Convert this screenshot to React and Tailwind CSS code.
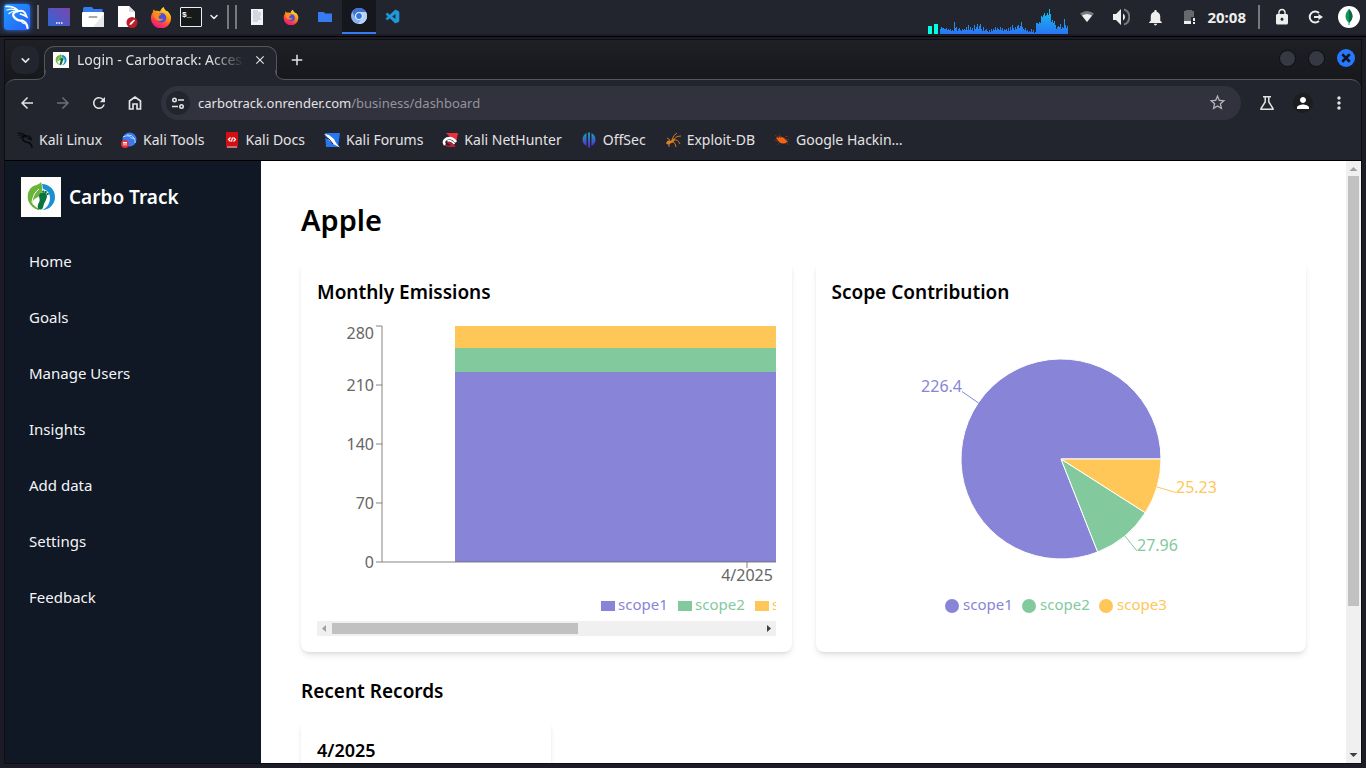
import { VscVscode } from "react-icons/vsc";
import {
  MdArrowBack,
  MdArrowForward,
  MdRefresh,
  MdStarBorder,
  MdPerson,
  MdMoreVert,
  MdNotifications,
  MdLock,
  MdClose,
  MdAdd,
} from "react-icons/md";
import { ChevronDown } from "lucide-react";

const UI = "font-['Noto_Sans','Open_Sans',sans-serif]";

const cpuLoad = [
  5, 7, 6, 6, 5, 5, 6, 4, 5, 4, 5, 3, 4, 3, 12, 6, 7, 3, 5, 6, 4, 3, 5, 4, 5, 4, 7, 4, 9, 4, 7, 4,
  6, 3, 9, 5, 7, 10, 5, 8, 10, 5, 3, 7, 3, 4, 5, 3, 2, 4, 2, 5, 3, 5, 4, 7, 4, 6, 5, 4, 7, 4, 6, 3,
  5, 4, 5, 3, 6, 3, 7, 4, 9, 6, 4, 7, 5, 8, 9, 6, 8, 12, 7, 5, 4, 6, 3, 4, 2, 3, 2, 5, 2, 4, 1, 2,
  11, 11, 10, 12, 11, 18, 17, 19, 21, 18, 19, 21, 19, 25, 20, 12, 14, 11, 13, 9, 5, 7, 8, 7, 10, 5,
  7, 6, 15, 9, 6, 8,
];

function Dragon({ size, color }) {
  return (
    <svg width={size} height={size} viewBox="0 0 24 24" fill="none" stroke={color} strokeWidth="1.700" strokeLinecap="round" aria-hidden="true">
      <path d="M1 1.500Q9 1 13.500 6" />
      <path d="M2 5Q8 3 13 6M4 8.500Q8 5 13 6.500" strokeWidth="1.300" />
      <path d="M13 6Q6 8 9 12t8 3.500Q22 17 22.500 23" strokeWidth="2.200" />
      <path d="M12.500 6.500Q18 4.500 20 8l1.500 3.500-3-1.500-3-1" strokeWidth="1.800" />
      <path d="M16 16q2 3 5 3" strokeWidth="1.200" />
    </svg>
  );
}

function Firefox({ size }) {
  return (
    <svg width={size} height={size} viewBox="0 0 24 24" aria-hidden="true">
      <defs>
        <linearGradient id="fx" x1="0.8" y1="0" x2="0.3" y2="1">
          <stop offset="0" stopColor="#fff24a" />
          <stop offset="0.4" stopColor="#ff980e" />
          <stop offset="0.75" stopColor="#ff3750" />
          <stop offset="1" stopColor="#e31587" />
        </linearGradient>
      </defs>
      <path d="M15 1c.3 2 1.500 3 3 4.500.8-.2 1.500.2 2 1 2 2.200 3 4 3 7A11 11 0 0 1 1 13.500c0-3 .8-5 2-6.500 0-1.200.4-2.500 1.300-3.500.2 1 .7 1.600 1.200 2C8 5 9.500 5.500 11 6c.5-2 2-4 4-5z" fill="url(#fx)" />
      <circle cx="12.500" cy="13" r="5.300" fill="#4b4fdc" />
      <path d="M4 7c2-.6 3.500 0 4.500 1l4 .4c.2 1.200-1.800 1.600-2.500 2.200-.8 1-.7 2 0 3 1.400 1 3 .4 4.300.4-1 2.600-5.300 3.200-7.800.8C4.500 13 4 10 4 7z" fill="#ff8a1c" />
    </svg>
  );
}

function Leaf({ size }) {
  return (
    <svg width={size} height={size} viewBox="0 0 40 40" aria-hidden="true">
      <rect width="40" height="40" fill="#fffdfb" />
      <path d="M21 7a13 13 0 0 1 0 26c4-1 8-6 8-12 0-5-3-8-7-9z" fill="#1a90d0" />
      <path d="M8.500 14A13 13 0 0 0 18 32.500C10 28 8 23 9.500 18z" fill="#5fae35" stroke="#5fae35" />
      <path d="M20 5c1.500 5 2 10-1 13.500C15 22 13 21 11 26 7 20 6 14 11 10c3-2 7-2 9-5z" fill="#6cb33b" />
      <path d="M11 25c1-6 3-10 7-13" stroke="#fff" fill="none" />
      <path d="M20 16c3-2 6 0 6 3s-2 5-3 8-1 6-4 5.500-2.500-4-1.500-6 1.500-3 1-5-1-4 1.500-5.500z" fill="#08743f" />
      <path d="M22 14.500h.5M24.500 15h.5M26.500 17h.5" stroke="#08743f" strokeWidth="1.800" strokeLinecap="round" />
    </svg>
  );
}

function Divider() {
  return <span className="h-6 w-0.5 bg-[#77797e]" />;
}

function TaskIcon({ label, children, className = "w-[34px]" }) {
  return (
    <button aria-label={label} className={`flex h-[34px] items-center justify-center ${className}`}>
      {children}
    </button>
  );
}

function Taskbar() {
  return (
    <header className="flex h-[34px] shrink-0 items-center bg-[#23252e] text-[#eeeeec]">
      <button
        aria-label="Applications"
        className="ml-1 flex size-[26px] items-center justify-center rounded-[3px] bg-linear-to-br from-[#1a9bff] to-[#2b5cf5] shadow-[0_0_5px_#2472f5]"
      >
        <Dragon size={24} color="#fff" />
      </button>
      <span className="ml-[7px] flex"><Divider /></span>
      <div className="ml-[3px] flex items-center">
        <TaskIcon label="Show desktop">
          <svg width="22" height="18" viewBox="0 0 22 18">
            <defs><linearGradient id="desk" x1="0" y1="1" x2="1" y2="0"><stop offset="0" stopColor="#2f66d8" /><stop offset="1" stopColor="#7b46ab" /></linearGradient></defs>
            <rect width="22" height="18" rx="1" fill="url(#desk)" />
            <path d="M8 15h1.500M10.500 15H12M13 15h1.500" stroke="#fff" strokeWidth="1.500" />
          </svg>
        </TaskIcon>
        <TaskIcon label="File manager">
          <svg width="22" height="20" viewBox="0 0 22 20">
            <path d="M1 6V1.500Q1 0 2.500 0H10l1.500 2h9V6z" fill="#367bf0" />
            <rect y="5" width="22" height="15" rx="1" fill="#fff" />
            <path d="M22 7v12q0 1-1 1H11z" fill="#e8e8e8" />
            <path d="M7.500 10h7" stroke="#aaa" strokeWidth="2" strokeLinecap="round" />
          </svg>
        </TaskIcon>
        <TaskIcon label="Text editor">
          <svg width="22" height="22" viewBox="0 0 22 22">
            <path d="M2 0h11l6 6v15H2z" fill="#fff" /><path d="M13 0v6h6z" fill="#ddd" />
            <circle cx="16" cy="16.500" r="5.500" fill="#c01c28" />
            <path d="m13.500 19 .5-2 4-3.500 1 1-3.500 4z" fill="#fff" />
          </svg>
        </TaskIcon>
        <TaskIcon label="Web browser"><Firefox size={22} /></TaskIcon>
        <TaskIcon label="Terminal" className="w-[26px]">
          <svg width="22" height="20" viewBox="0 0 22 20">
            <rect x=".5" y=".5" width="21" height="19" rx=".5" fill="#171a1b" stroke="#eee" />
            <text x="2" y="10" fill="#fff" fontSize="8" fontWeight="700" fontFamily="Liberation Mono, monospace">$_</text>
          </svg>
        </TaskIcon>
        <TaskIcon label="More terminals" className="w-5"><ChevronDown size={12} strokeWidth={3} /></TaskIcon>
      </div>
      <span className="ml-[3px] flex gap-1.5"><Divider /><Divider /></span>
      <div className="ml-[3px] flex items-center">
        <TaskIcon label="Notes window">
          <svg width="14" height="18" viewBox="0 0 14 18">
            <path d="M1 1h12v16H1z" fill="#f3f3f5" />
            <path d="M3 3h5M3 5h8M3 7h8M3 9h7M3 11h8M3 13h5" stroke="#b4b8d0" />
          </svg>
        </TaskIcon>
        <TaskIcon label="Firefox window"><Firefox size={16} /></TaskIcon>
        <TaskIcon label="Folder window">
          <svg width="14" height="12" viewBox="0 0 14 12"><path d="M0 1h6l1 1.500h7V11H0z" fill="#367bf0" /></svg>
        </TaskIcon>
        <TaskIcon label="Chromium window" className="w-[34px] border-b-2 border-[#367bf0] bg-[#16171d]">
          <svg width="16" height="16" viewBox="0 0 16 16">
            <circle cx="8" cy="8" r="8" fill="#8ab4f0" />
            <path d="M8 4h7A8 8 0 0 0 1.200 3.700L4.500 10A4 4 0 0 1 8 4z" fill="#3f72cf" />
            <path d="M15 4a8 8 0 0 1-8 12l4.500-6A4 4 0 0 0 8 4z" fill="#b8d3fb" />
            <circle cx="8" cy="8" r="3.800" fill="#fff" /><circle cx="8" cy="8" r="2.900" fill="#3573dc" />
          </svg>
        </TaskIcon>
        <TaskIcon label="VS Code window"><VscVscode size={16} color="#1f98dc" stroke="#1f98dc" strokeWidth={0.6} /></TaskIcon>
      </div>

      <div className="ml-auto flex h-full items-center pr-1.5">
        <svg className="mr-[7px]" width="140" height="34" viewBox="0 0 140 34" role="img" aria-label="System load" shapeRendering="crispEdges">
          <defs>
            <linearGradient id="load" gradientUnits="userSpaceOnUse" x1="0" y1="10" x2="0" y2="34">
              <stop offset="0" stopColor="#12bfee" /><stop offset="1" stopColor="#2a74f5" />
            </linearGradient>
          </defs>
          <path d="M0 26h4v8H0zM6 24h4v10H6z" fill="#00ffdf" />
          {cpuLoad.map((h, i) => (
            <rect key={i} x={12 + i} y={34 - h} width="1" height={h} fill="url(#load)" />
          ))}
        </svg>
        <TaskIcon label="Network" className="w-6">
          <svg width="16" height="14" viewBox="0 0 16 14">
            <path d="M1 3.500Q8-1.500 15 3.500L8 12z" fill="#77797e" /><path d="M3 5.500Q8 2.500 13 5.500L8 12z" fill="#eee" />
          </svg>
        </TaskIcon>
        <TaskIcon label="Volume" className="ml-2.5 w-6">
          <svg width="18" height="18" viewBox="0 0 18 18" fill="none">
            <path d="M1 6h3l5-5v16l-5-5H1z" fill="#eee" />
            <path d="M11 5.500q2 1 2 3.500t-2 3.500z" fill="#eee" />
            <path d="M12 1.500c7 2 7 13 0 15" stroke="#77797e" strokeWidth="2" />
          </svg>
        </TaskIcon>
        <TaskIcon label="Notifications" className="ml-2.5 w-6"><MdNotifications size={19} /></TaskIcon>
        <TaskIcon label="Battery" className="ml-2.5 w-6">
          <svg width="14" height="16" viewBox="0 0 14 16">
            <path d="M2 2h2V1h6v1h2v6H9v4H2z" fill="#68696e" /><path d="M2 12h7v3H2z" fill="#eee" /><path d="M11 9h2v3h-2zM11 13h2v2h-2z" fill="#eee" />
          </svg>
        </TaskIcon>
        <time className="ml-1.5 text-[15px] font-bold">20:08</time>
        <span className="ml-3 flex"><Divider /></span>
        <TaskIcon label="Lock screen" className="ml-2.5 w-6"><MdLock size={18} /></TaskIcon>
        <TaskIcon label="Log out" className="ml-2.5 w-6">
          <svg width="16" height="16" viewBox="0 0 16 16" fill="none" stroke="#eee" strokeWidth="2">
            <path d="M11 4A5.500 5.500 0 1 0 11 12M6 8h5" /><path d="m10.500 5 4.500 3-4.500 3z" fill="#eee" stroke="none" />
          </svg>
        </TaskIcon>
        <button aria-label="MongoDB" className="ml-2.5 flex size-[22px] items-center justify-center rounded-full bg-white">
          <svg width="8" height="16" viewBox="0 0 8 16"><path d="M4 0c4 4 5 9 .5 13.500V16h-1v-2.500C-1 9 0 4 4 0z" fill="#10955a" /><path d="M4 0c4 4 5 9 .5 13.500H4z" fill="#096b45" /></svg>
        </button>
      </div>
    </header>
  );
}

function TabStrip() {
  return (
    <div className="flex h-[39px] items-end bg-linear-to-b from-[#1e2026] to-[#17181c] pl-1.5 text-[#e3e3e3]">
      <button aria-label="Search tabs" className="mb-[5px] flex size-7 items-center justify-center rounded-[10px] bg-[#23252e]">
        <ChevronDown size={13} strokeWidth={3} />
      </button>
      <div className="relative z-10 ml-[5px] -mb-px flex h-[34px] w-[233px] items-center rounded-t-[10px] border border-b-0 border-[#55575d] bg-[#23252e] px-2">
        <svg className="absolute bottom-0 -left-[9px]" width="10" height="10" viewBox="0 0 10 10"><path d="M10 0q0 9.500-10 9.500V10h10z" fill="#23252e" /><path d="M9.500 0q0 9.500-9.500 9.500" fill="none" stroke="#55575d" /></svg>
        <svg className="absolute bottom-0 -right-[9px]" width="10" height="10" viewBox="0 0 10 10"><path d="M0 0q0 9.500 10 9.500V10H0z" fill="#23252e" /><path d="M.5 0q0 9.500 9.500 9.500" fill="none" stroke="#55575d" /></svg>
        <span className="mb-2 flex w-full items-center">
          <Leaf size={16} />
          <span className="ml-2 flex-1 overflow-hidden whitespace-nowrap text-[14px] leading-5 [mask-image:linear-gradient(to_right,black_80%,transparent)]">
            Login - Carbotrack: Access
          </span>
          <button aria-label="Close tab" className="ml-2 flex size-4 items-center justify-center"><MdClose size={14} /></button>
        </span>
      </div>
      <button aria-label="New tab" className="mb-[9px] ml-2.5 flex size-5 items-center justify-center"><MdAdd size={18} /></button>
      <div className="mb-3 ml-auto mr-1.5 flex items-center gap-3">
        <button aria-label="Minimize" className="size-[17px] rounded-full border border-[#0d0e11] bg-[#363944]" />
        <button aria-label="Maximize" className="size-[17px] rounded-full border border-[#0d0e11] bg-[#363944]" />
        <button aria-label="Close window" className="flex size-[18px] items-center justify-center rounded-full bg-[#2777ff]">
          <svg width="10" height="10" viewBox="0 0 8 8"><path d="m1 1 6 6M7 1 1 7" stroke="#10131c" strokeWidth="2" /></svg>
        </button>
      </div>
    </div>
  );
}

function ToolButton({ label, children }) {
  return <button aria-label={label} className="flex size-9 items-center justify-center">{children}</button>;
}

function Toolbar() {
  return (
    <div className="flex h-[46px] items-center rounded-t-[10px] border-t border-[#55575d] bg-[#23252e] px-1 text-[#e3e3e3]">
      <ToolButton label="Back"><MdArrowBack size={18} /></ToolButton>
      <ToolButton label="Forward"><MdArrowForward size={18} color="#6d6f75" /></ToolButton>
      <ToolButton label="Reload"><MdRefresh size={18} /></ToolButton>
      <ToolButton label="Home page">
        <svg width="14" height="16" viewBox="0 0 14 16" fill="none" stroke="currentColor" strokeWidth="1.700"><path d="M1.500 14V6L7 2l5.500 4v8H9V9H5v5z" /></svg>
      </ToolButton>
      <form className="ml-2 mr-2 flex h-[34px] flex-1 items-center rounded-full bg-[#31323e] pl-[5px] pr-1.5" onSubmit={(e) => e.preventDefault()}>
        <button type="button" aria-label="Site information" className="flex size-6 items-center justify-center rounded-full bg-[#23252e]">
          <svg width="14" height="14" viewBox="0 0 14 14" fill="none" stroke="currentColor" strokeWidth="1.600">
            <circle cx="3.500" cy="4" r="1.700" /><path d="M7 4h6M1 10.500h6" /><circle cx="10.500" cy="10.500" r="1.700" />
          </svg>
        </button>
        <div className="relative ml-2 flex-1 text-[13px] leading-5">
          <input aria-label="Address" readOnly value="carbotrack.onrender.com/business/dashboard" className="w-full bg-transparent text-[#93959b] outline-none" />
          <span aria-hidden="true" className="pointer-events-none absolute left-0 top-0 bg-[#31323e]">carbotrack.onrender.com</span>
        </div>
        <button type="button" aria-label="Bookmark this page" className="flex size-9 items-center justify-center text-[#b5b6ba]"><MdStarBorder size={19} /></button>
      </form>
      <ToolButton label="Labs">
        <svg width="16" height="16" viewBox="0 0 16 16" fill="none" stroke="currentColor" strokeWidth="1.500"><path d="M4 1.800h8M6.200 2v5L2 13.500v.7h12v-.7L9.800 7V2" /></svg>
      </ToolButton>
      <ToolButton label="Profile"><span className="flex size-5 items-center justify-center rounded-full bg-[#1b1d1f] text-white"><MdPerson size={18} /></span></ToolButton>
      <ToolButton label="Menu"><MdMoreVert size={20} /></ToolButton>
    </div>
  );
}

const svg16 = { width: 16, height: 16, viewBox: "0 0 16 16", fill: "none", "aria-hidden": true };

const bookmarks = [
  ["Kali Linux", <Dragon size={16} color="#08090b" />],
  ["Kali Tools", <svg {...svg16}><circle cx="8.500" cy="7.500" r="7" fill="#367bf0" /><path d="M2 5q6-3 8 1 5 0 4 5M6 3q5-1 8 4" stroke="#bcd4ff" /><circle cx="4" cy="12" r="4" fill="#e5303c" /><path d="M2 10.500h4M3 10.500v3M5 10.500v3" stroke="#fff" /></svg>],
  ["Kali Docs", <svg {...svg16}><path d="M2 0h12v16H2z" fill="#d40f14" /><path d="M2 14h12v2H2z" fill="#8d1014" /><path d="M3 15h10" stroke="#ddd" /><path d="M6.500 5.500 4.500 7.500l2 2M9.500 5.500l2 2-2 2M7.500 9.500l1-4" stroke="#fff" strokeWidth="1.200" /></svg>],
  ["Kali Forums", <svg {...svg16}><path d="M1 1h15l-2 14H2z" fill="#2777f0" /><path d="m0 2 5 1 5 4 2 4 4 4.500-6-3-5-4-2-4z" fill="#fff" /><path d="M1 5l4 2 4 5" stroke="#10131c" /></svg>],
  ["Kali NetHunter", <svg {...svg16}><path d="M4 1h12l-2 10z" fill="#ee303c" /><path d="M3 13Q0 9 5 6.500q5-2 9 3.500" stroke="#fff" strokeWidth="2.600" /><path d="M3 13q3 2 8 1M5 9.500l8 5" stroke="#d01f38" strokeWidth="1.500" /><path d="M5.500 9q3-1.500 7 3" stroke="#fff" strokeWidth="1.500" /></svg>],
  ["OffSec", <svg {...svg16}><defs><linearGradient id="off" x1="0" y1="0" x2="0" y2="1"><stop stopColor="#10a5b5" /><stop offset="1" stopColor="#6123d8" /></linearGradient></defs><path d="M5.500 1v13A7.300 7.300 0 0 1 5.500 1zM7 .5h2v15H7zM10.500 1a7.300 7.300 0 0 1 0 13z" fill="url(#off)" /></svg>],
  ["Exploit-DB", <svg {...svg16}><path d="M1 11q2-4 5-2 1-3 4-2-1 4-4 4-3 3-5 0z" fill="#e0861f" /><path d="M7 8Q8 3 12 1M8 8q4-5 8-4M8 8q5-1 7 4M7 9q4 2 4 6M4 10l0 5M5 8 2 6" stroke="#c97a20" /></svg>],
  ["Google Hackin…", <svg {...svg16}><path d="M2 6q4-3 8 0l4 4q-5 3-9 0z" fill="#f06414" /><path d="m1 3 4 3M5 2l2 4M11 5l3-1M11 7l4 1M0 8l4 1M3 13l3-3M12 10l3 3" stroke="#6c3220" /></svg>],
];

function Bookmarks() {
  return (
    <nav aria-label="Bookmarks" className="flex h-9 items-center gap-[19px] border-b border-black bg-[#23252e] pb-1.5 pl-3 text-[14px] leading-5 text-[#e3e3e3]">
      {bookmarks.map(([name, icon]) => (
        <a key={name} href="#" className="flex items-center gap-1.5 whitespace-nowrap">{icon}{name}</a>
      ))}
    </nav>
  );
}

function Sidebar() {
  return (
    <aside className="w-64 shrink-0 bg-[#101725] p-4 text-[#f4f5f7]">
      <div className="mb-6 flex items-center gap-2">
        <Leaf size={40} />
        <span className="text-[19px] font-semibold leading-[30px] text-white">Carbo Track</span>
      </div>
      <nav className="flex flex-col gap-4 text-[15px] leading-6">
        {["Home", "Goals", "Manage Users", "Insights", "Add data", "Settings", "Feedback"].map((item) => (
          <a key={item} href="#" className="px-2 py-2">{item}</a>
        ))}
      </nav>
    </aside>
  );
}

const series = [
  { name: "scope1", color: "#8884d8" },
  { name: "scope2", color: "#82ca9d" },
  { name: "scope3", color: "#ffc658" },
];

function BarChart() {
  return (
    <svg width="800" height="300" viewBox="0 0 800 300" className="block max-w-none text-[16px]" role="img" aria-label="Monthly emissions by scope">
      <g shapeRendering="crispEdges">
        <rect x="138" y="5" width="584" height="22" fill="#ffc658" />
        <rect x="138" y="27" width="584" height="24" fill="#82ca9d" />
        <rect x="138" y="51" width="584" height="190" fill="#8884d8" />
      </g>
      <path d="M65 5v236M59 5h6M59 64h6M59 123h6M59 182h6M59 241h736M430 241v6" stroke="#666" strokeOpacity="0.8" fill="none" />
      <g fill="#666" textAnchor="end">
        <text x="57" y="18">280</text>
        <text x="57" y="70">210</text>
        <text x="57" y="129">140</text>
        <text x="57" y="188">70</text>
        <text x="57" y="247">0</text>
      </g>
      <text x="430" y="260" fill="#666" textAnchor="middle">4/2025</text>
      {series.map((s, i) => (
        <g key={s.name} fill={s.color} className="text-[15px]">
          <rect x={284 + i * 77} y="280" width="14" height="10" />
          <text x={301 + i * 77} y="289">{s.name}</text>
        </g>
      ))}
    </svg>
  );
}

function PieChart() {
  return (
    <svg width="458" height="300" viewBox="0 0 458 300" className="block shrink-0 text-[16px]" role="img" aria-label="Contribution by scope">
      <g stroke="#fff">
        <path d="M229 138H329A100 100 0 1 0 265.700 231z" fill="#8884d8" />
        <path d="M229 138 265.700 231A100 100 0 0 0 313.300 191.700z" fill="#82ca9d" />
        <path d="M229 138 313.300 191.700A100 100 0 0 0 329 138z" fill="#ffc658" />
      </g>
      <g fill="none">
        <path d="M146.500 82 130 70.500" stroke="#8884d8" />
        <path d="m293 215 12 15" stroke="#82ca9d" />
        <path d="m325 166 19 5.500" stroke="#ffc658" />
      </g>
      <text x="130" y="71" fill="#8884d8" textAnchor="end">226.4</text>
      <text x="305" y="230" fill="#82ca9d">27.96</text>
      <text x="344" y="172" fill="#ffc658">25.23</text>
      {series.map((s, i) => (
        <g key={s.name} fill={s.color} className="text-[15px]">
          <circle cx={120 + i * 77} cy="285" r="7" />
          <text x={131 + i * 77} y="289">{s.name}</text>
        </g>
      ))}
    </svg>
  );
}

function Arrow({ d, color }) {
  return <svg width="15" height="15" viewBox="0 0 15 15" className="shrink-0" aria-hidden="true"><path d={d} fill={color} /></svg>;
}

function Card({ title, children }) {
  return (
    <section className="min-w-0 rounded-lg bg-white p-4 shadow-md">
      <h2 className="mb-3.5 text-[19px] font-semibold leading-[30px]">{title}</h2>
      {children}
    </section>
  );
}

function Dashboard() {
  return (
    <main className="min-w-0 flex-1 overflow-hidden p-10 text-black">
      <h1 className="mb-[22px] text-[29px] font-semibold leading-[38px]">Apple</h1>
      <div className="mb-6 grid grid-cols-2 gap-6">
        <Card title="Monthly Emissions">
          <div className="overflow-hidden"><BarChart /></div>
          <div className="flex h-[15px] items-center bg-[#f0f0f0]">
            <Arrow d="M9 4v7L5 7.500z" color="#a0a0a0" />
            <div className="flex-1"><div className="h-[11px] w-[57.3%] bg-[#c1c1c1]" /></div>
            <Arrow d="M6 4v7l4-3.500z" color="#404040" />
          </div>
        </Card>
        <Card title="Scope Contribution">
          <div className="flex justify-center"><PieChart /></div>
        </Card>
      </div>
      <h2 className="mb-3.5 text-[19px] font-semibold leading-[30px]">Recent Records</h2>
      <article className="w-[250px] rounded-lg bg-white p-4 shadow-md">
        <h3 className="text-[18px] font-semibold leading-7">4/2025</h3>
      </article>
    </main>
  );
}

export default function App() {
  return (
    <div className={`flex h-screen flex-col overflow-hidden bg-[#1b1c25] ${UI}`}>
      <Taskbar />
      <div className="mt-0.5 flex min-h-0 flex-1 flex-col border-t border-black p-1 pt-0">
        <div className="mt-0.5 flex min-h-0 flex-1 flex-col border border-[#0d0e12]">
          <TabStrip />
          <div className="flex flex-col bg-[#17181c]"><Toolbar /></div>
          <Bookmarks />
          <div className="flex min-h-0 flex-1 overflow-hidden bg-white">
            <Sidebar />
            <Dashboard />
            <div className="flex w-[15px] shrink-0 flex-col items-center bg-[#f0f0f0]">
              <Arrow d="M3.500 10h8L7.500 6z" color="#a0a0a0" />
              <div className="w-[11px] flex-1"><div className="h-[75.2%] bg-[#c1c1c1]" /></div>
              <Arrow d="M3.500 5h8L7.500 9z" color="#404040" />
            </div>
          </div>
        </div>
      </div>
    </div>
  );
}
